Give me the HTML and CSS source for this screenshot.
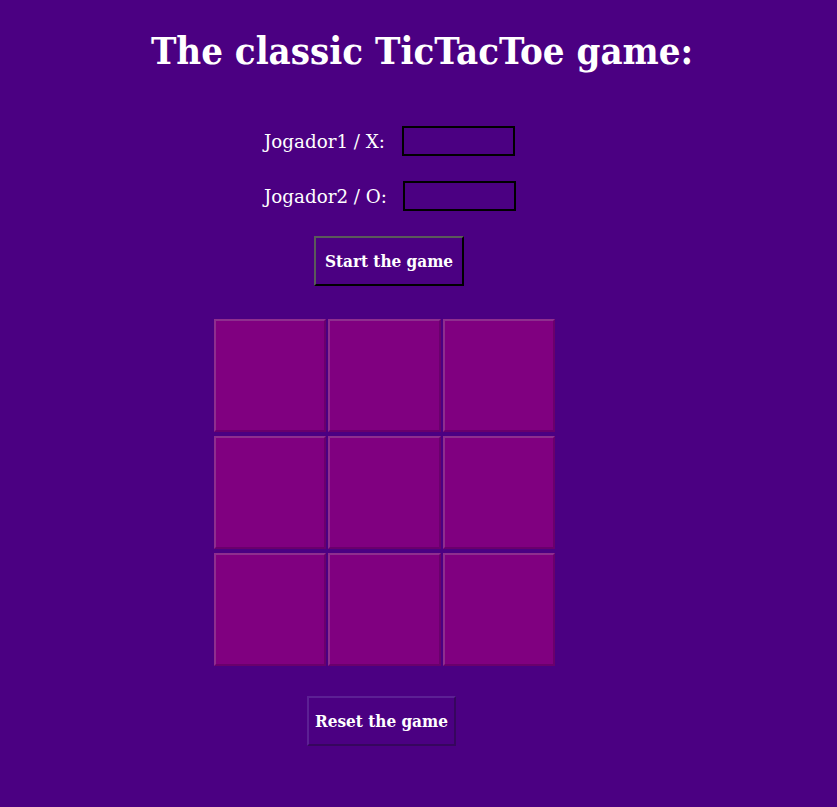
FILE: index.html
```html
<!DOCTYPE html>
<html>
<head>
<meta charset="utf-8">
<link rel="stylesheet" href="styles.css">
</head>
<body>
<h1 class="title">The classic TicTacToe game:</h1>
<main class="game">
  <div class="player-row">
    <label class="player-label">Jogador1 / X:</label>
    <input class="player-input" type="text">
  </div>
  <div class="player-row row-two">
    <label class="player-label">Jogador2 / O:</label>
    <input class="player-input" type="text">
  </div>
  <button class="btn btn-start">Start the game</button>
  <div class="board">
    <button class="cell"></button><button class="cell"></button><button class="cell"></button>
    <button class="cell"></button><button class="cell"></button><button class="cell"></button>
    <button class="cell"></button><button class="cell"></button><button class="cell"></button>
  </div>
  <button class="btn btn-reset">Reset the game</button>
</main>
</body>
</html>
```
FILE: styles.css
```css
html, body {
  margin: 0;
  padding: 0;
  background: #4b0082;
}
body {
  font-family: "DejaVu Serif", "Liberation Serif", serif;
  color: #fff;
  width: 837px;
  height: 807px;
  overflow: hidden;
}
.title {
  margin: 0;
  padding-top: 26px;
  text-align: center;
  font-size: 38px;
  font-stretch: condensed;
  line-height: 50px;
  font-weight: bold;
  padding-left: 7px;
}
.game {
  margin-left: 214px;
  width: 341px;
  display: flex;
  flex-direction: column;
  align-items: flex-start;
}
.player-row {
  display: flex;
  align-items: center;
  margin-top: 50px;
  padding-left: 50px;
  height: 30px;
}
.row-two {
  margin-top: 25px;
}
.player-label {
  font-size: 18.3px;
  width: 138px;
}
.row-two .player-label { width: 139px; }
.player-input {
  box-sizing: border-box;
  width: 113px;
  height: 30px;
  border: 2px solid #000;
  background: transparent;
  margin: 0;
  padding: 0;
}
.btn {
  box-sizing: border-box;
  height: 50px;
  background: transparent;
  color: #fff;
  font-family: inherit;
  font-weight: bold;
  font-stretch: condensed;
  font-size: 17px;
  padding: 0;
  border-width: 2px;
  border-style: solid;
}
.btn-start {
  width: 150px;
  margin-top: 25px;
  margin-left: 100px;
  border-color: #5a5a5a #000 #000 #5a5a5a;
}
.board {
  margin-top: 33px;
  display: grid;
  grid-template-columns: 112px 113px 112px;
  grid-auto-rows: 113px;
  column-gap: 2px;
  row-gap: 4px;
}
.cell {
  box-sizing: border-box;
  background: #800080;
  border: 2px solid;
  border-color: #8e2e8e #6a006c #6a006c #8e2e8e;
  margin: 0;
  padding: 0;
}
.btn-reset {
  width: 149px;
  margin-top: 30px;
  margin-left: 93px;
  border-color: #5c2094 #36065e #36065e #5c2094;
}
```
